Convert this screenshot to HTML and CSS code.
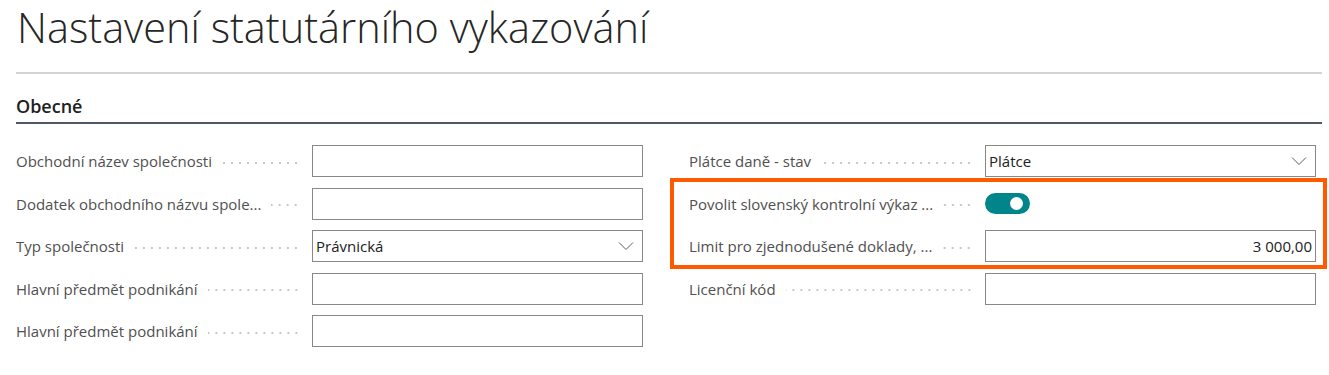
FILE: index.html
```html
<!DOCTYPE html>
<html>
  <head>
    <meta charset="utf-8">
    <meta name="viewport" content="width=device-width, initial-scale=1">
    <link rel="stylesheet" href="styles.css">
  </head>
  <body>
    <div class="page">
      <h1 class="title">Nastavení statutárního vykazování</h1>

      <div class="group">
        <h2 class="group-caption">Obecné</h2>

        <div class="columns">
          <div class="column">
            <div class="field">
              <span class="label">Obchodní název společnosti</span>
              <div class="box"></div>
            </div>
            <div class="field">
              <span class="label">Dodatek obchodního názvu spole...</span>
              <div class="box"></div>
            </div>
            <div class="field">
              <span class="label">Typ společnosti</span>
              <div class="box select">
                <span class="value">Právnická</span>
                <svg class="chevron" width="16" height="10" viewBox="0 0 16 10"><path d="M1 1.5 L8 8.5 L15 1.5" fill="none" stroke="#605e5c" stroke-width="1"/></svg>
              </div>
            </div>
            <div class="field">
              <span class="label">Hlavní předmět podnikání</span>
              <div class="box"></div>
            </div>
            <div class="field">
              <span class="label">Hlavní předmět podnikání</span>
              <div class="box"></div>
            </div>
          </div>

          <div class="column">
            <div class="field">
              <span class="label">Plátce daně - stav</span>
              <div class="box select">
                <span class="value">Plátce</span>
                <svg class="chevron" width="16" height="10" viewBox="0 0 16 10"><path d="M1 1.5 L8 8.5 L15 1.5" fill="none" stroke="#605e5c" stroke-width="1"/></svg>
              </div>
            </div>
            <div class="highlight">
              <div class="field">
                <span class="label">Povolit slovenský kontrolní výkaz ...</span>
                <div class="toggle-cell">
                  <span class="toggle"><span class="knob"></span></span>
                </div>
              </div>
              <div class="field">
                <span class="label">Limit pro zjednodušené doklady, ...</span>
                <div class="box number"><span class="value">3 000,00</span></div>
              </div>
            </div>
            <div class="field">
              <span class="label">Licenční kód</span>
              <div class="box"></div>
            </div>
          </div>
        </div>
      </div>
    </div>
  </body>
</html>
```

FILE: styles.css
```css
body {
  margin: 0;
  background: #ffffff;
  font-family: "Open Sans", "Noto Sans", sans-serif;
  color: #212121;
}

.page {
  padding: 0 7px 0 16px;
}

.title {
  margin: 0;
  padding: 2px 0 20px 1px;
  font-size: 41.5px;
  font-weight: 300;
  line-height: 50px;
  color: #262626;
  border-bottom: 2px solid #d2d4d6;
}

.group-caption {
  margin: 0;
  padding: 20px 0 4px 0;
  font-size: 18px;
  font-weight: 600;
  line-height: 24px;
  color: #212121;
  border-bottom: 2px solid #4f5766;
}

.columns {
  display: flex;
  gap: 46px;
  padding-top: 16px;
}

.column {
  display: flex;
  flex-direction: column;
  width: 627px;
}

.field {
  display: flex;
  align-items: center;
  height: 42.5px;
}

.label {
  width: 296px;
  flex-shrink: 0;
  font-size: 15px;
  color: #505050;
  white-space: nowrap;
  overflow: hidden;
  display: flex;
  align-items: center;
}

.label::after {
  content: "";
  flex: 1;
  height: 4px;
  margin: 3px 12px 0 10px;
  background-image: radial-gradient(circle, #c8c8c8 0.9px, transparent 1.3px);
  background-size: 8px 4px;
  background-repeat: repeat-x;
  background-position: right center;
}

.box {
  width: 331px;
  height: 30px;
  border: 1px solid #8a8886;
  display: flex;
  align-items: center;
  box-sizing: content-box;
}

.value {
  font-size: 15px;
  color: #212121;
  padding-left: 3px;
}

.select {
  justify-content: space-between;
}

.chevron {
  margin-right: 8px;
}

.number {
  justify-content: flex-end;
}

.number .value {
  padding-right: 3px;
}

.toggle-cell {
  width: 333px;
  display: flex;
  align-items: center;
}

.toggle {
  position: relative;
  width: 45px;
  height: 21px;
  border-radius: 11px;
  background: #00858a;
}

.knob {
  position: absolute;
  top: 4px;
  right: 7px;
  width: 13px;
  height: 13px;
  border-radius: 50%;
  background: #ffffff;
}

.highlight {
  position: relative;
}

.highlight::before {
  content: "";
  position: absolute;
  left: -19px;
  right: -11px;
  top: -5px;
  bottom: -1px;
  border: 4px solid #ff5a00;
  pointer-events: none;
}
```
